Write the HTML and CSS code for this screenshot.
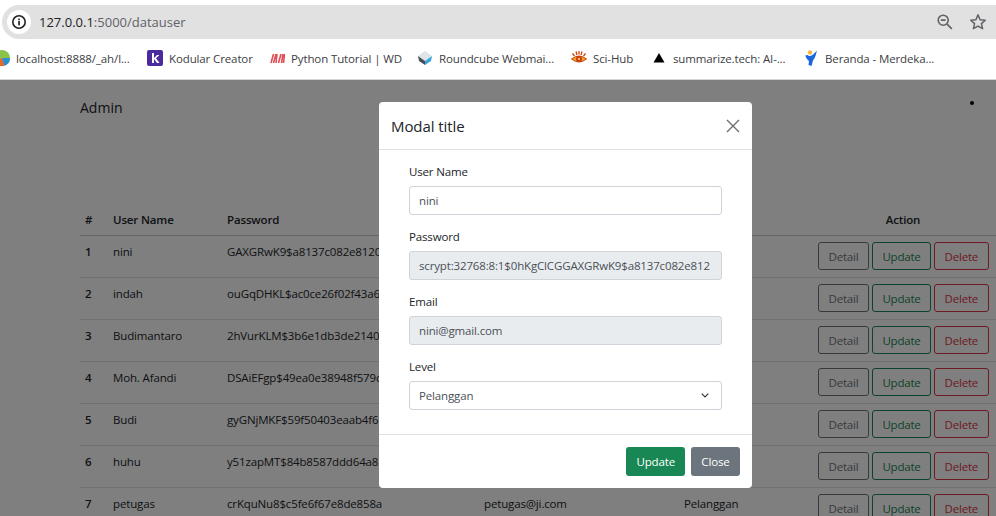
FILE: index.html
```html
<!DOCTYPE html>
<html lang="en">
<head>
<meta charset="utf-8">
<title>Data User</title>
<link rel="stylesheet" href="styles.css">
</head>
<body>
<div class="browser">
  <div class="toolbar">
    <div class="omnibox">
      <span class="site-info">
        <svg width="16" height="16" viewBox="0 0 16 16"><circle cx="8" cy="8" r="6.200" fill="none" stroke="#222" stroke-width="1.600"/><rect x="7.200" y="7" width="1.700" height="4.400" fill="#222"/><rect x="7.200" y="4.600" width="1.700" height="1.600" fill="#222"/></svg>
      </span>
      <span class="url"><span class="url-host">127.0.0.1</span>:5000/datauser</span>
      <span class="omni-actions">
        <svg width="18" height="18" viewBox="0 0 18 18"><circle cx="7.200" cy="7.200" r="5" fill="none" stroke="#5f6368" stroke-width="1.600"/><path d="M4.800 7.200h4.800M10.800 10.800l5 5" fill="none" stroke="#5f6368" stroke-width="1.700"/></svg>
        <svg width="18" height="18" viewBox="0 0 18 18"><path d="M9 1.900l2.100 4.800 5.200.5-3.900 3.400 1.200 5.100L9 13.100l-4.600 2.600 1.200-5.100-3.900-3.400 5.200-.5z" fill="none" stroke="#5f6368" stroke-width="1.500" stroke-linejoin="round"/></svg>
      </span>
    </div>
  </div>
  <div class="bookmarks">
    <span class="bm bm-local">
      <svg width="16" height="16" viewBox="0 0 16 16"><circle cx="8" cy="8" r="8" fill="#8bc34a"/><path d="M8 8L16 8A8 8 0 0 1 10 15.800z" fill="#2c8fd6"/><path d="M8 8L10 15.800A8 8 0 0 1 1 12z" fill="#e8672c"/></svg>
      <span class="bm-text">localhost:8888/_ah/l...</span>
    </span>
    <span class="bm bm-kodular">
      <svg width="16" height="16" viewBox="0 0 16 16"><rect width="16" height="16" rx="2" fill="#4a2a9c"/><path d="M5 3h2v5l3-3h2.400L9 8.300l3.500 4.700H10L7 9v4H5z" fill="#fff"/></svg>
      <span class="bm-text">Kodular Creator</span>
    </span>
    <span class="bm bm-python">
      <svg width="15" height="16" viewBox="0 0 15 16"><path d="M1 13L3.500 4M3.500 13L6 4M6 13L7 4M8.500 13L11 4M11.500 13L13 4M13.500 13L14.500 4" fill="none" stroke="#d8232a" stroke-width="1.600" opacity=".8"/></svg>
      <span class="bm-text">Python Tutorial | WD</span>
    </span>
    <span class="bm bm-round">
      <svg width="16" height="16" viewBox="0 0 16 16"><path d="M8 1L15 6 8 11 1 6z" fill="#dfe4e8"/><path d="M1 6L8 11V15L2 11z" fill="#4a4f55"/><path d="M15 6L8 11V15L14 11z" fill="#37a7e0"/></svg>
      <span class="bm-text">Roundcube Webmai...</span>
    </span>
    <span class="bm bm-sci">
      <svg width="16" height="16" viewBox="0 0 16 16"><path d="M.5 9Q8 3 15.500 9 8 15 .5 9z" fill="#f5a623" stroke="#c9400e"/><circle cx="8" cy="9" r="3" fill="#c9400e"/><circle cx="8" cy="9" r="1" fill="#ffe08a"/><path d="M1.500 3.500L3.500 6M5 1.500L6 5M8 1V4.500M11 1.500L10 5M14.500 3.500L12.500 6" stroke="#c9400e" stroke-width="1.300"/></svg>
      <span class="bm-text">Sci-Hub</span>
    </span>
    <span class="bm bm-sum">
      <svg width="12" height="16" viewBox="0 0 12 16"><path d="M6 3L11.500 12.500H.5z" fill="#000"/></svg>
      <span class="bm-text">summarize.tech: AI-...</span>
    </span>
    <span class="bm bm-ber">
      <svg width="12" height="16" viewBox="0 0 12 16"><circle cx="5" cy="2.500" r="2.200" fill="#f5b942"/><path d="M11.800 .5C11 6 9.500 8.500 8 10.500L6.500 16 3.500 15 4 11C2.500 10 1 8 .3 5.500L2.500 5C4.500 7 7.500 6 11.800 .5z" fill="#1a66e0"/></svg>
      <span class="bm-text">Beranda - Merdeka...</span>
    </span>
  </div>
  <div class="viewport">
    <div class="page">
      <div class="nav">
        <span class="brand">Admin</span>
        <span class="nav-dot"></span>
      </div>
      <table class="users">
        <thead>
          <tr><th>#</th><th>User Name</th><th>Password</th><th>Email</th><th>Level</th><th class="act">Action</th></tr>
        </thead>
        <tbody>
          <tr><th>1</th><td>nini</td><td><span class="pw">GAXGRwK9$a8137c082e8120</span></td><td></td><td></td><td class="act"><span class="btn b-detail">Detail</span><span class="btn b-update">Update</span><span class="btn b-delete">Delete</span></td></tr>
          <tr><th>2</th><td>indah</td><td><span class="pw">ouGqDHKL$ac0ce26f02f43a6</span></td><td></td><td></td><td class="act"><span class="btn b-detail">Detail</span><span class="btn b-update">Update</span><span class="btn b-delete">Delete</span></td></tr>
          <tr><th>3</th><td>Budimantaro</td><td><span class="pw">2hVurKLM$3b6e1db3de2140</span></td><td></td><td></td><td class="act"><span class="btn b-detail">Detail</span><span class="btn b-update">Update</span><span class="btn b-delete">Delete</span></td></tr>
          <tr><th>4</th><td>Moh. Afandi</td><td><span class="pw">DSAiEFgp$49ea0e38948f579c</span></td><td></td><td></td><td class="act"><span class="btn b-detail">Detail</span><span class="btn b-update">Update</span><span class="btn b-delete">Delete</span></td></tr>
          <tr><th>5</th><td>Budi</td><td><span class="pw">gyGNjMKF$59f50403eaab4f6</span></td><td></td><td></td><td class="act"><span class="btn b-detail">Detail</span><span class="btn b-update">Update</span><span class="btn b-delete">Delete</span></td></tr>
          <tr><th>6</th><td>huhu</td><td><span class="pw">y51zapMT$84b8587ddd64a8</span></td><td></td><td></td><td class="act"><span class="btn b-detail">Detail</span><span class="btn b-update">Update</span><span class="btn b-delete">Delete</span></td></tr>
          <tr><th>7</th><td>petugas</td><td>crKquNu8$c5fe6f67e8de858a</td><td>petugas@ji.com</td><td>Pelanggan</td><td class="act"><span class="btn b-detail">Detail</span><span class="btn b-update">Update</span><span class="btn b-delete">Delete</span></td></tr>
        </tbody>
      </table>
    </div>
    <div class="backdrop"></div>
    <div class="modal">
      <div class="modal-header">
        <span class="modal-title">Modal title</span>
        <svg class="modal-close" width="14" height="14" viewBox="0 0 14 14"><path d="M1 1l12 12M13 1L1 13" fill="none" stroke="#6f6f6f" stroke-width="1.400"/></svg>
      </div>
      <div class="modal-body">
        <div class="field">
          <label class="field-label">User Name</label>
          <div class="control">nini</div>
        </div>
        <div class="field">
          <label class="field-label">Password</label>
          <div class="control disabled">scrypt:32768:8:1$0hKgClCGGAXGRwK9$a8137c082e812</div>
        </div>
        <div class="field">
          <label class="field-label">Email</label>
          <div class="control disabled">nini@gmail.com</div>
        </div>
        <div class="field">
          <label class="field-label">Level</label>
          <div class="control select">
            <span>Pelanggan</span>
            <svg width="8" height="5" viewBox="0 0 8 5"><path d="M.7 .7L4 4 7.300 .7" fill="none" stroke="#343a40" stroke-width="1.200"/></svg>
          </div>
        </div>
      </div>
      <div class="modal-footer">
        <span class="solid solid-green">Update</span>
        <span class="solid solid-gray">Close</span>
      </div>
    </div>
  </div>
</div>
</body>
</html>
```
FILE: styles.css
```css
* { box-sizing: border-box; }
html, body { margin: 0; padding: 0; }
body {
  width: 996px;
  height: 516px;
  overflow: hidden;
  font-family: "Open Sans", "Noto Sans", sans-serif;
  background: #fff;
}
.browser { display: flex; flex-direction: column; height: 516px; }

.toolbar { height: 40px; padding-top: 5px; flex: none; }
.omnibox {
  height: 34px;
  margin: 0 0 0 2px;
  width: 1010px;
  border-radius: 17px;
  background: #e1e1e1;
  display: flex;
  align-items: center;
  padding-left: 5px;
}
.site-info {
  width: 24px;
  height: 24px;
  border-radius: 50%;
  background: #fff;
  display: flex;
  align-items: center;
  justify-content: center;
  flex: none;
}
.url { margin-left: 8px; font-size: 13px; color: #5f6368; flex: 1; }
.url-host { color: #202124; }
.omni-actions { display: flex; gap: 15px; margin-right: 25px; align-items: center; }

.bookmarks {
  height: 40px;
  flex: none;
  display: flex;
  align-items: center;
  border-bottom: 1px solid #d6d6d6;
  padding-bottom: 3px;
  white-space: nowrap;
}
.bm { display: flex; align-items: center; font-size: 11.5px; color: #3c4043; flex: none; }
.bm svg { flex: none; }
.bm-text { margin-left: 6px; letter-spacing: -0.12px; }
.bm-local { margin-left: -6px; width: 153px; }
.bm-kodular { width: 123px; }
.bm-python { width: 147px; }
.bm-round { width: 154px; }
.bm-sci { width: 82px; }
.bm-sum { width: 152px; }
.bm-sum .bm-text { margin-left: 8px; }
.bm-ber .bm-text { margin-left: 8px; }

.viewport { position: relative; flex: 1; overflow: hidden; background: #fff; }
.page { padding: 0 0 0 80px; }
.nav {
  height: 125px;
  display: flex;
  justify-content: space-between;
  padding-top: 18px;
  padding-right: 22px;
}
.brand { font-size: 14px; color: #212529; line-height: 20px; }
.nav-dot { width: 4px; height: 4px; border-radius: 50%; background: #000; margin-top: 3px; }

.users {
  width: 916px;
  table-layout: fixed;
  border-collapse: collapse;
  font-size: 11.5px;
  letter-spacing: -0.15px;
  color: #212529;
}
.users th, .users td {
  padding: 8px 5px 0;
  text-align: left;
  vertical-align: top;
  border-bottom: 1px solid #dee2e6;
  height: 42px;
  line-height: 16px;
  white-space: nowrap;
  overflow: hidden;
}
.users thead th { height: 30px; padding-top: 7px; font-weight: 600; border-bottom-color: #c9cdd1; }
.users th:nth-child(1) { width: 28px; }
.users th:nth-child(2) { width: 114px; }
.users th:nth-child(3) { width: 257px; }
.users th:nth-child(4) { width: 200px; }
.users th:nth-child(5) { width: 131px; }
.users tbody th { font-weight: 600; }
.users .act { text-align: center; padding: 6px 8px 0; }
.users thead .act { padding-top: 7px; }
.pw { display: block; width: 152px; overflow: hidden; }

.btn {
  display: inline-block;
  height: 28px;
  line-height: 27px;
  padding: 0 9.5px;
  border: 1px solid;
  border-radius: 3px;
  font-size: 11.5px;
  letter-spacing: -0.2px;
  margin-left: 3px;
  vertical-align: top;
}
.btn:first-child { margin-left: 0; }
.b-detail { color: #6c757d; border-color: #6c757d; }
.b-update { color: #198754; border-color: #198754; }
.b-delete { color: #dc3545; border-color: #dc3545; }

.backdrop { position: absolute; inset: 0; background: rgba(0, 0, 0, .5); }

.modal {
  position: absolute;
  left: 379px;
  top: 22px;
  width: 373px;
  height: 386px;
  background: #fff;
  border-radius: 4px;
  display: flex;
  flex-direction: column;
  color: #212529;
}
.modal-header {
  height: 48px;
  flex: none;
  display: flex;
  align-items: center;
  justify-content: space-between;
  padding: 0 12px;
  border-bottom: 1px solid #dee2e6;
}
.modal-title { font-size: 15px; font-weight: 500; letter-spacing: -0.07px; }
.modal-body {
  flex: 1;
  padding: 14px 30px 0;
  display: flex;
  flex-direction: column;
  gap: 14px;
}
.field { display: flex; flex-direction: column; }
.field-label { font-size: 11.5px; line-height: 16px; margin-bottom: 6px; letter-spacing: -0.15px; }
.control {
  height: 29px;
  border: 1px solid #ced4da;
  border-radius: 3px;
  padding: 0 9px;
  font-size: 11.5px;
  letter-spacing: -0.15px;
  line-height: 27px;
  color: #495057;
  white-space: nowrap;
  overflow: hidden;
}
.disabled { background: #e9ecef; }
.select { display: flex; align-items: center; justify-content: space-between; padding-right: 12px; }
.modal-footer {
  height: 54px;
  flex: none;
  border-top: 1px solid #dee2e6;
  display: flex;
  justify-content: flex-end;
  align-items: flex-start;
  gap: 6px;
  padding: 12px 12px 0;
}
.solid {
  height: 29px;
  line-height: 29px;
  padding: 0 10px;
  border-radius: 3px;
  color: #fff;
  font-size: 11.5px;
  letter-spacing: -0.15px;
  font-weight: 500;
  text-align: center;
}
.solid-green { background: #198754; }
.solid-gray { background: #6c757d; min-width: 49px; }
```
